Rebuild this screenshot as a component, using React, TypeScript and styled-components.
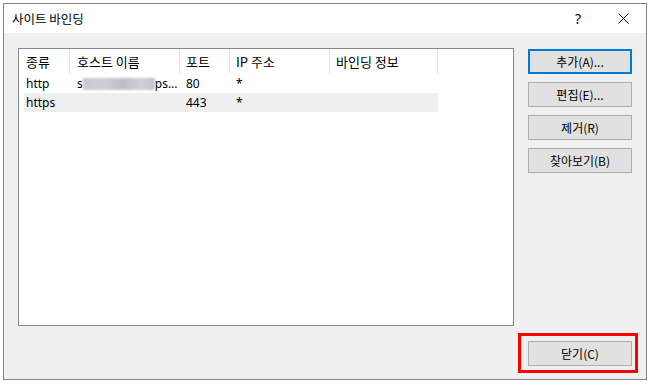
import styled, { createGlobalStyle } from 'styled-components';

const GlobalStyle = createGlobalStyle`
  html, body {
    margin: 0;
    padding: 0;
    background: #fff;
  }
  body {
    font-family: "Noto Sans", "Noto Sans CJK KR", sans-serif;
    font-size: 12px;
    color: #000;
  }
`;

const Page = styled.div`
  padding: 3px 0 0 3px;
`;

const Dialog = styled.div`
  width: 642px;
  border: 1px solid #838383;
  display: flex;
  flex-direction: column;
  background: #f0f0f0;
`;

const TitleBar = styled.div`
  height: 29px;
  background: #fff;
  display: flex;
  align-items: center;
  padding-left: 8px;
  padding-right: 10px;
  font-family: "Noto Sans CJK KR", sans-serif;
  font-size: 12.5px;
`;

const TitleText = styled.div`
  flex: 1;
  line-height: 16px;
`;

const TitleIcon = styled.div<{ $w: number; $mr?: number }>`
  width: ${p => p.$w}px;
  margin-right: ${p => p.$mr ?? 0}px;
  display: flex;
  justify-content: center;
  align-items: center;
  font-family: "Noto Sans", sans-serif;
  font-size: 14px;
  line-height: 16px;
`;

const Body = styled.div`
  padding: 15px 14px 6px 14px;
  display: flex;
  flex-direction: column;
`;

const TopRow = styled.div`
  display: flex;
  gap: 14px;
  height: 278px;
`;

const ListBox = styled.div`
  width: 494px;
  border: 1px solid #828790;
  background: #fff;
  display: flex;
  flex-direction: column;
`;

const HeaderRow = styled.div`
  display: flex;
  height: 25px;
`;

const HeaderCell = styled.div<{ $w: number; $pad: number }>`
  width: ${p => p.$w}px;
  box-sizing: border-box;
  padding-left: ${p => p.$pad}px;
  border-right: 1px solid #e5e5e5;
  display: flex;
  align-items: center;
  font-family: "Noto Sans CJK KR", sans-serif;
  font-size: 13px;
  line-height: 16px;
`;

const Row = styled.div<{ $selected?: boolean }>`
  display: flex;
  height: 19px;
  margin-left: 5px;
  width: 414px;
  background: ${p => (p.$selected ? '#efefef' : 'transparent')};
`;

const Cell = styled.div<{ $w: number; $pad: number }>`
  width: ${p => p.$w}px;
  box-sizing: border-box;
  padding-left: ${p => p.$pad}px;
  display: flex;
  align-items: center;
  line-height: 16px;
  white-space: nowrap;
  overflow: hidden;
`;

const Blur = styled.span`
  display: inline-block;
  width: 72px;
  height: 12px;
  margin-top: 1px;
  background: linear-gradient(90deg, #c9c9cf 0%, #cfcdd6 30%, #bfbdc6 55%, #d0ced8 80%, #c4c2ca 100%);
  filter: blur(1.2px);
`;

const ButtonColumn = styled.div`
  width: 104px;
  display: flex;
  flex-direction: column;
  gap: 8px;
  padding-top: 1px;
`;

const Button = styled.button<{ $default?: boolean }>`
  width: 104px;
  height: 25px;
  box-sizing: border-box;
  margin: 0;
  padding: 0;
  background: #e1e1e1;
  border: ${p => (p.$default ? '2px solid #0078d7' : '1px solid #adadad')};
  font-family: "Noto Sans CJK KR", sans-serif;
  font-size: 12px;
  line-height: 16px;
  color: #000;
`;

const BottomRow = styled.div`
  display: flex;
  justify-content: flex-end;
  margin-top: 7px;
  margin-right: -6px;
`;

const Highlight = styled.div`
  border: 3px solid #ff0000;
  padding: 5px 3px 4px 7px;
`;

const CloseIcon = () => (
  <svg width="11" height="11" viewBox="0 0 11 11">
    <path d="M0.5 0.5 L10.5 10.5 M10.5 0.5 L0.5 10.5" stroke="#000" strokeWidth="1" fill="none" />
  </svg>
);

const columns = [
  { label: '종류', w: 51, pad: 7 },
  { label: '호스트 이름', w: 110, pad: 7 },
  { label: '포트', w: 50, pad: 6 },
  { label: 'IP 주소', w: 100, pad: 6 },
  { label: '바인딩 정보', w: 108, pad: 6 },
];

const rowCols = [
  { w: 46, pad: 2 },
  { w: 110, pad: 7 },
  { w: 50, pad: 6 },
  { w: 100, pad: 6 },
  { w: 108, pad: 6 },
];

const bindings = [
  { type: 'http', host: true, port: '80', ip: '*', info: '' },
  { type: 'https', host: false, port: '443', ip: '*', info: '' },
];

export default function App() {
  return (
    <Page>
      <GlobalStyle />
      <Dialog>
        <TitleBar>
          <TitleText>사이트 바인딩</TitleText>
          <TitleIcon $w={20} $mr={22}>?</TitleIcon>
          <TitleIcon $w={26}>
            <CloseIcon />
          </TitleIcon>
        </TitleBar>
        <Body>
          <TopRow>
            <ListBox>
              <HeaderRow>
                {columns.map(c => (
                  <HeaderCell key={c.label} $w={c.w} $pad={c.pad}>
                    {c.label}
                  </HeaderCell>
                ))}
              </HeaderRow>
              {bindings.map((b, i) => (
                <Row key={b.type} $selected={i === 1}>
                  <Cell $w={rowCols[0].w} $pad={rowCols[0].pad}>{b.type}</Cell>
                  <Cell $w={rowCols[1].w} $pad={rowCols[1].pad}>
                    {b.host && (
                      <>
                        s<Blur />ps...
                      </>
                    )}
                  </Cell>
                  <Cell $w={rowCols[2].w} $pad={rowCols[2].pad}>{b.port}</Cell>
                  <Cell $w={rowCols[3].w} $pad={rowCols[3].pad}>{b.ip}</Cell>
                  <Cell $w={rowCols[4].w} $pad={rowCols[4].pad}>{b.info}</Cell>
                </Row>
              ))}
            </ListBox>
            <ButtonColumn>
              <Button $default>추가(A)...</Button>
              <Button>편집(E)...</Button>
              <Button>제거(R)</Button>
              <Button>찾아보기(B)</Button>
            </ButtonColumn>
          </TopRow>
          <BottomRow>
            <Highlight>
              <Button>닫기(C)</Button>
            </Highlight>
          </BottomRow>
        </Body>
      </Dialog>
    </Page>
  );
}
